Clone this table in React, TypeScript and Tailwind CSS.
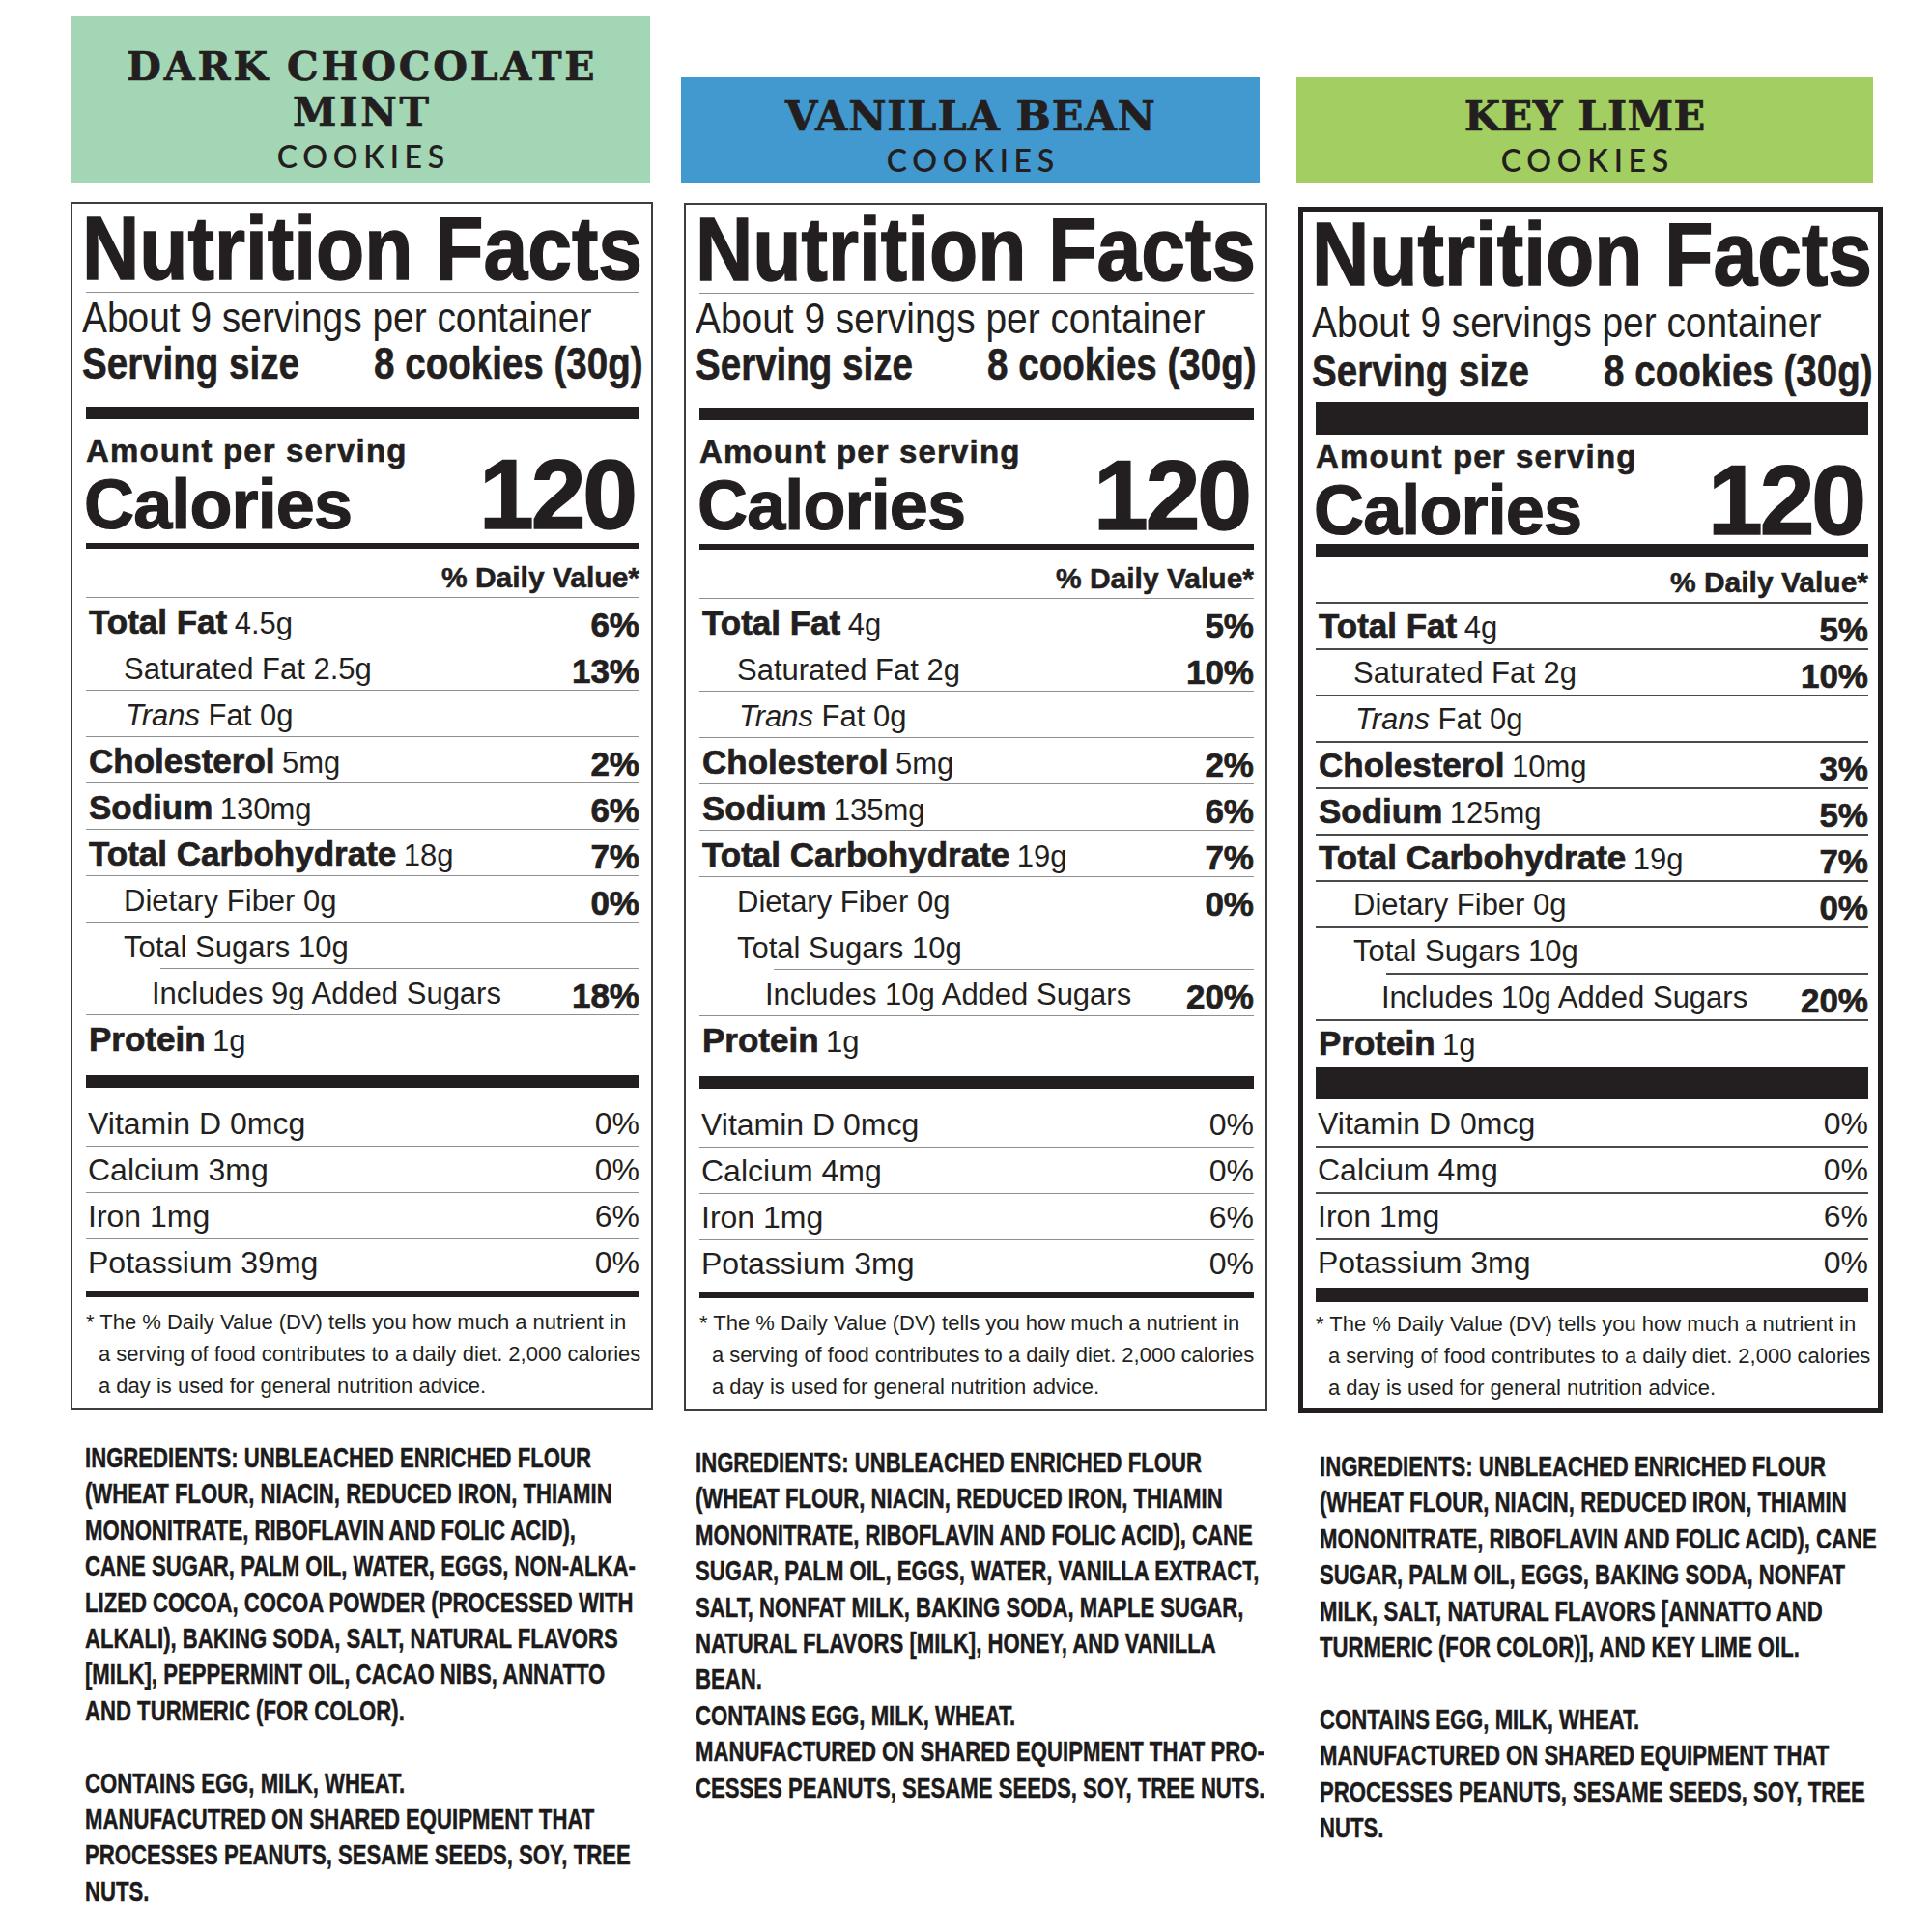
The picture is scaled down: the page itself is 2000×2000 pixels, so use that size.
import React from 'react';

const SANS = "font-['Liberation_Sans',Arial,sans-serif]";
const SERIF = "font-['DejaVu_Serif',serif]";
const LATO = "font-['Lato',sans-serif]";

type Kind = 'main' | 'sub' | 'trans' | 'added';
type Line = 'full' | 'none' | 'indent';

type Nutrient = { kind: Kind; line: Line; label: string; amount?: string; dv?: string };
type Vitamin = { line: Line; label: string; dv: string };

type Skin = {
  box: string;
  titleRule: string;
  about: string;
  serving: string;
  bar1: string;
  cal: string;
  bar2: string;
  dv: string;
  rule: string;
  ruleIndent: string;
  ruleNone: string;
  row: string;
  vrow: string;
  bar3: string;
  vit: string;
  bar4: string;
  foot: string;
};

const regular: Skin = {
  box: 'border-2 border-[#3d3d3d] pl-[14px] pr-[12px] pt-[6px] pb-[7px]',
  titleRule: 'mt-[5px] h-px bg-[#8f8f8f]',
  about: 'mt-[4px]',
  serving: 'mt-[3px]',
  bar1: 'mt-[23px] h-[13px]',
  cal: 'mt-[15px] pb-[10px]',
  bar2: 'h-[6px]',
  dv: 'mt-[10px]',
  rule: 'h-px bg-[#8f8f8f]',
  ruleIndent: 'h-px bg-[#8f8f8f] ml-[77px]',
  ruleNone: 'h-px',
  row: 'h-[47px] pt-[8px]',
  vrow: 'h-[47px]',
  bar3: 'mt-[15px] h-[13px]',
  vit: 'mt-[12px]',
  bar4: 'mt-[6px] h-[7px]',
  foot: 'mt-[9px]',
};

const heavy: Skin = {
  box: 'border-[5px] border-[#231f20] pl-[13px] pr-[10px] pt-[4px] pb-[5px]',
  titleRule: 'mt-[5px] h-px bg-[#555555]',
  about: 'mt-[3px]',
  serving: 'mt-[6px]',
  bar1: 'mt-[10px] h-[34px]',
  cal: 'mt-[5px] pb-[5px]',
  bar2: 'h-[14px]',
  dv: 'mt-[6px]',
  rule: 'h-[2px] bg-[#4a4a4a]',
  ruleIndent: 'h-[2px] bg-[#4a4a4a] ml-[73px]',
  ruleNone: 'h-[2px]',
  row: 'h-[46px] pt-[6px]',
  vrow: 'h-[46px]',
  bar3: 'mt-[2px] h-[33px]',
  vit: 'mt-0',
  bar4: 'mt-[3px] h-[15px]',
  foot: 'mt-[6px]',
};

type Product = {
  title: string[];
  headerBg: string;
  headerBox: string;
  titleText: string;
  width: string;
  boxMt: string;
  skin: Skin;
  nutrients: Nutrient[];
  vitamins: Vitamin[];
  ingredients: string[];
  ingredientsBox: string;
};

const makeNutrients = (
  fat: [string, string],
  sat: [string, string],
  chol: [string, string],
  sodium: [string, string],
  carb: [string, string],
  added: [string, string],
  satLine: Line,
): Nutrient[] => [
  { kind: 'main', line: 'full', label: 'Total Fat', amount: fat[0], dv: fat[1] },
  { kind: 'sub', line: satLine, label: 'Saturated Fat', amount: sat[0], dv: sat[1] },
  { kind: 'trans', line: 'full', label: 'Fat', amount: '0g' },
  { kind: 'main', line: 'full', label: 'Cholesterol', amount: chol[0], dv: chol[1] },
  { kind: 'main', line: 'full', label: 'Sodium', amount: sodium[0], dv: sodium[1] },
  { kind: 'main', line: 'full', label: 'Total Carbohydrate', amount: carb[0], dv: carb[1] },
  { kind: 'sub', line: 'full', label: 'Dietary Fiber', amount: '0g', dv: '0%' },
  { kind: 'sub', line: 'full', label: 'Total Sugars', amount: '10g' },
  { kind: 'added', line: 'indent', label: `Includes ${added[0]} Added Sugars`, dv: added[1] },
  { kind: 'main', line: 'full', label: 'Protein', amount: '1g' },
];

const makeVitamins = (calcium: string, potassium: string): Vitamin[] => [
  { line: 'none', label: 'Vitamin D 0mcg', dv: '0%' },
  { line: 'full', label: `Calcium ${calcium}`, dv: '0%' },
  { line: 'full', label: 'Iron 1mg', dv: '6%' },
  { line: 'full', label: `Potassium ${potassium}`, dv: '0%' },
];

const products: Product[] = [
  {
    title: ['DARK CHOCOLATE', 'MINT'],
    headerBg: 'bg-[#a2d6b5]',
    headerBox: 'h-[172px] w-[599px] ml-[1px] pt-[22px]',
    titleText: 'text-[41px] tracking-[0.07em] pl-[0.07em]',
    width: 'w-[603px]',
    boxMt: 'mt-[20px]',
    skin: regular,
    nutrients: makeNutrients(
      ['4.5g', '6%'],
      ['2.5g', '13%'],
      ['5mg', '2%'],
      ['130mg', '6%'],
      ['18g', '7%'],
      ['9g', '18%'],
      'none',
    ),
    vitamins: makeVitamins('3mg', '39mg'),
    ingredients: [
      'INGREDIENTS: UNBLEACHED ENRICHED FLOUR',
      '(WHEAT FLOUR, NIACIN, REDUCED IRON, THIAMIN',
      'MONONITRATE, RIBOFLAVIN AND FOLIC ACID),',
      'CANE SUGAR, PALM OIL, WATER, EGGS, NON-ALKA-',
      'LIZED COCOA, COCOA POWDER (PROCESSED WITH',
      'ALKALI), BAKING SODA, SALT, NATURAL FLAVORS',
      '[MILK], PEPPERMINT OIL, CACAO NIBS, ANNATTO',
      'AND TURMERIC (FOR COLOR).',
      '',
      'CONTAINS EGG, MILK, WHEAT.',
      'MANUFACUTRED ON SHARED EQUIPMENT THAT',
      'PROCESSES PEANUTS, SESAME SEEDS, SOY, TREE',
      'NUTS.',
    ],
    ingredientsBox: 'mt-[30px] pl-[15px]',
  },
  {
    title: ['VANILLA BEAN'],
    headerBg: 'bg-[#4299cf]',
    headerBox: 'h-[109px] w-[599px] -ml-[3px] pt-[14px]',
    titleText: 'text-[43px] tracking-[0.02em] pl-[0.02em]',
    width: 'w-[604px]',
    boxMt: 'mt-[21px]',
    skin: regular,
    nutrients: makeNutrients(
      ['4g', '5%'],
      ['2g', '10%'],
      ['5mg', '2%'],
      ['135mg', '6%'],
      ['19g', '7%'],
      ['10g', '20%'],
      'none',
    ),
    vitamins: makeVitamins('4mg', '3mg'),
    ingredients: [
      'INGREDIENTS: UNBLEACHED ENRICHED FLOUR',
      '(WHEAT FLOUR, NIACIN, REDUCED IRON, THIAMIN',
      'MONONITRATE, RIBOFLAVIN AND FOLIC ACID), CANE',
      'SUGAR, PALM OIL, EGGS, WATER, VANILLA EXTRACT,',
      'SALT, NONFAT MILK, BAKING SODA, MAPLE SUGAR,',
      'NATURAL FLAVORS [MILK], HONEY, AND VANILLA',
      'BEAN.',
      'CONTAINS EGG, MILK, WHEAT.',
      'MANUFACTURED ON SHARED EQUIPMENT THAT PRO-',
      'CESSES PEANUTS, SESAME SEEDS, SOY, TREE NUTS.',
    ],
    ingredientsBox: 'mt-[34px] pl-[12px]',
  },
  {
    title: ['KEY LIME'],
    headerBg: 'bg-[#a3cf62]',
    headerBox: 'h-[109px] w-[597px] -ml-[2px] pt-[14px]',
    titleText: 'text-[43px] tracking-[0.01em] pl-[0.01em]',
    width: 'w-[605px]',
    boxMt: 'mt-[25px]',
    skin: heavy,
    nutrients: makeNutrients(
      ['4g', '5%'],
      ['2g', '10%'],
      ['10mg', '3%'],
      ['125mg', '5%'],
      ['19g', '7%'],
      ['10g', '20%'],
      'full',
    ),
    vitamins: makeVitamins('4mg', '3mg'),
    ingredients: [
      'INGREDIENTS: UNBLEACHED ENRICHED FLOUR',
      '(WHEAT FLOUR, NIACIN, REDUCED IRON, THIAMIN',
      'MONONITRATE, RIBOFLAVIN AND FOLIC ACID), CANE',
      'SUGAR, PALM OIL, EGGS, BAKING SODA, NONFAT',
      'MILK, SALT, NATURAL FLAVORS [ANNATTO AND',
      'TURMERIC (FOR COLOR)], AND KEY LIME OIL.',
      '',
      'CONTAINS EGG, MILK, WHEAT.',
      'MANUFACTURED ON SHARED EQUIPMENT THAT',
      'PROCESSES PEANUTS, SESAME SEEDS, SOY, TREE',
      'NUTS.',
    ],
    ingredientsBox: 'mt-[36px] pl-[22px]',
  },
];

const Rule = ({ line, skin }: { line: Line; skin: Skin }) => {
  if (line === 'none') return <div className={skin.ruleNone} />;
  if (line === 'indent') return <div className={skin.ruleIndent} />;
  return <div className={skin.rule} />;
};

const NutrientRow = ({ n, skin }: { n: Nutrient; skin: Skin }) => {
  const pad =
    n.kind === 'main' ? 'pl-[3px]' : n.kind === 'sub' ? 'pl-[39px]' : n.kind === 'trans' ? 'pl-[41px]' : 'pl-[68px]';
  return (
    <div>
      <Rule line={n.line} skin={skin} />
      <div className={`${skin.row} flex items-center justify-between ${pad}`}>
        <div className="leading-[39px] whitespace-nowrap">
          {n.kind === 'main' && (
            <>
              <span className="text-[35px] font-bold [-webkit-text-stroke:0.7px_#231f20]">{n.label}</span>{' '}
              <span className="text-[31px] ml-[3px]">{n.amount}</span>
            </>
          )}
          {n.kind === 'sub' && (
            <span className="text-[31px]">
              {n.label} {n.amount}
            </span>
          )}
          {n.kind === 'trans' && (
            <span className="text-[31px]">
              <i>Trans</i> {n.label} {n.amount}
            </span>
          )}
          {n.kind === 'added' && <span className="text-[31px]">{n.label}</span>}
        </div>
        {n.dv && (
          <div className="text-[35px] font-bold leading-[39px] [-webkit-text-stroke:0.7px_#231f20]">{n.dv}</div>
        )}
      </div>
    </div>
  );
};

const Label = ({ p }: { p: Product }) => {
  const s = p.skin;
  return (
    <div className={`${p.boxMt} ${s.box} ${SANS} text-[#231f20] bg-white`}>
      <div className="font-bold text-[93px] leading-[80px] -ml-[4px] whitespace-nowrap origin-left scale-x-[0.884] [-webkit-text-stroke:1.5px_#231f20]">
        Nutrition Facts
      </div>
      <div className={s.titleRule} />
      <div className={`${s.about} text-[45px] leading-[44px] -ml-[4px] whitespace-nowrap origin-left scale-x-[0.864]`}>
        About 9 servings per container
      </div>
      <div
        className={`${s.serving} font-bold text-[47px] leading-[44px] -ml-[4px] w-[708px] flex justify-between whitespace-nowrap origin-left scale-x-[0.82] [-webkit-text-stroke:0.6px_#231f20]`}
      >
        <span>Serving size</span>
        <span>8 cookies (30g)</span>
      </div>
      <div className={`${s.bar1} bg-[#231f20]`} />
      <div className={`${s.cal} flex items-end justify-between`}>
        <div className="font-bold">
          <div className="text-[33px] leading-[36px] tracking-[0.035em] [-webkit-text-stroke:0.6px_#231f20]">
            Amount per serving
          </div>
          <div className="mt-[7px] text-[72px] leading-[60px] tracking-[-0.012em] -ml-[2px] [-webkit-text-stroke:1.2px_#231f20]">
            Calories
          </div>
        </div>
        <div className="text-[102px] font-bold leading-[80px] tracking-[-0.03em] mr-[5px] [-webkit-text-stroke:1.5px_#231f20]">
          120
        </div>
      </div>
      <div className={`${s.bar2} bg-[#231f20]`} />
      <div className={`${s.dv} text-[30px] font-bold leading-[40px] text-right [-webkit-text-stroke:0.5px_#231f20]`}>
        % Daily Value*
      </div>
      {p.nutrients.map((n) => (
        <NutrientRow key={n.label} n={n} skin={s} />
      ))}
      <div className={`${s.bar3} bg-[#231f20]`} />
      <div className={s.vit}>
        {p.vitamins.map((v) => (
          <div key={v.label}>
            <Rule line={v.line} skin={s} />
            <div className={`${s.vrow} flex items-center justify-between pl-[2px] text-[32px] leading-[46px]`}>
              <span>{v.label}</span>
              <span>{v.dv}</span>
            </div>
          </div>
        ))}
      </div>
      <div className={`${s.bar4} bg-[#231f20]`} />
      <div className={`${s.foot} text-[22px] leading-[33px] whitespace-nowrap`}>
        <div>* The % Daily Value (DV) tells you how much a nutrient in</div>
        <div className="pl-[13px]">a serving of food contributes to a daily diet. 2,000 calories</div>
        <div className="pl-[13px]">a day is used for general nutrition advice.</div>
      </div>
    </div>
  );
};

const Column = ({ p }: { p: Product }) => (
  <div className={`${p.width} flex flex-col`}>
    <div className="h-[172px] flex flex-col justify-end">
      <div className={`${p.headerBg} ${p.headerBox} flex flex-col items-center justify-center text-[#231f20]`}>
        {p.title.map((t) => (
          <div
            key={t}
            className={`${SERIF} font-bold leading-[47px] whitespace-nowrap [-webkit-text-stroke:0.7px_#231f20] ${p.titleText}`}
          >
            {t}
          </div>
        ))}
        <div className={`${LATO} font-semibold text-[32px] leading-[43px] tracking-[0.18em] pl-[0.18em]`}>COOKIES</div>
      </div>
    </div>
    <Label p={p} />
    <div
      className={`${p.ingredientsBox} ${SANS} font-bold text-[30px] leading-[37.4px] text-[#1c1a1a] [-webkit-text-stroke:0.5px_#1c1a1a]`}
    >
      {p.ingredients.map((line, i) => (
        <div key={i} className="whitespace-nowrap h-[37.4px] origin-left scale-x-[0.738]">
          {line}
        </div>
      ))}
    </div>
  </div>
);

export default function App() {
  return (
    <div className="w-[2000px] h-[2000px] bg-white pl-[73px] pt-[17px] flex gap-[32px] items-start">
      {products.map((p) => (
        <Column key={p.title.join(' ')} p={p} />
      ))}
    </div>
  );
}
